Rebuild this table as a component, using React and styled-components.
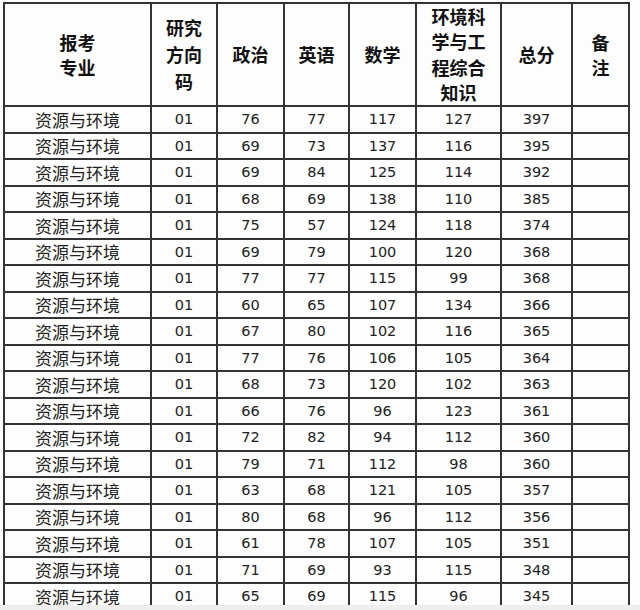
import React from "react";
import styled, { createGlobalStyle } from "styled-components";

const GlobalStyle = createGlobalStyle`
  html, body {
    margin: 0;
    padding: 0;
    background: #eeeeee;
  }
  body {
    font-family: "DejaVu Sans", "Noto Sans CJK SC", sans-serif;
    color: #1e1e1e;
  }
`;

const Frame = styled.div`
  height: 605px;
  overflow: hidden;
  background: #fdfdfd;
  padding: 2px 0 0 3px;
  box-sizing: border-box;
`;

const Sheet = styled.div`
  display: grid;
  grid-template-columns: 145px 64px 65px 63px 65px 83px 69px 55px;
  grid-template-rows: 101px;
  grid-auto-rows: 24.5px;
  gap: 2px;
  padding: 2px;
  width: max-content;
  background: #333;
`;

const HeadCell = styled.div`
  background: #fdfdfd;
  display: flex;
  flex-direction: column;
  align-items: center;
  justify-content: center;
  font-family: "Noto Sans CJK SC", sans-serif;
  font-weight: 700;
  font-size: 18px;
  line-height: ${(p) => p.$lh || 25}px;
  text-align: center;
  color: #111;
`;

const Cell = styled.div`
  background: #fdfdfd;
  display: flex;
  align-items: center;
  justify-content: center;
  font-family: ${(p) =>
    p.$cjk ? '"Noto Sans CJK SC", sans-serif' : '"DejaVu Sans", sans-serif'};
  font-size: ${(p) => (p.$cjk ? 17 : 14.5)}px;
  color: #222;
  white-space: nowrap;
`;

const headers = [
  { lines: ["报考", "专业"] },
  { lines: ["研究", "方向", "码"], lh: 27 },
  { lines: ["政治"] },
  { lines: ["英语"] },
  { lines: ["数学"] },
  { lines: ["环境科", "学与工", "程综合", "知识"], lh: 25.5 },
  { lines: ["总分"] },
  { lines: ["备", "注"] },
];

const scores = [
  [76, 77, 117, 127, 397],
  [69, 73, 137, 116, 395],
  [69, 84, 125, 114, 392],
  [68, 69, 138, 110, 385],
  [75, 57, 124, 118, 374],
  [69, 79, 100, 120, 368],
  [77, 77, 115, 99, 368],
  [60, 65, 107, 134, 366],
  [67, 80, 102, 116, 365],
  [77, 76, 106, 105, 364],
  [68, 73, 120, 102, 363],
  [66, 76, 96, 123, 361],
  [72, 82, 94, 112, 360],
  [79, 71, 112, 98, 360],
  [63, 68, 121, 105, 357],
  [80, 68, 96, 112, 356],
  [61, 78, 107, 105, 351],
  [71, 69, 93, 115, 348],
  [65, 69, 115, 96, 345],
];

export default function App() {
  return (
    <>
      <GlobalStyle />
      <Frame>
        <Sheet>
          {headers.map((h, i) => (
            <HeadCell key={"h" + i} $lh={h.lh}>
              {h.lines.map((l) => (
                <span key={l}>{l}</span>
              ))}
            </HeadCell>
          ))}
          {scores.map((row, r) => (
            <React.Fragment key={r}>
              <Cell $cjk>资源与环境</Cell>
              <Cell>01</Cell>
              {row.map((v, c) => (
                <Cell key={c}>{v}</Cell>
              ))}
              <Cell />
            </React.Fragment>
          ))}
        </Sheet>
      </Frame>
    </>
  );
}
